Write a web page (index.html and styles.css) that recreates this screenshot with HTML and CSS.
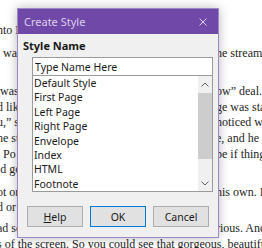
FILE: index.html
```html
<!DOCTYPE html>
<html lang="en">
<head>
    <meta charset="UTF-8" />
    <title>Create Style</title>
    <link rel="stylesheet" href="styles.css">
</head>
<body>
    <div class="doc">
        <p class="para">
            <span class="ln"><span class="l">nto Ni</span></span>
        </p>
        <p class="para scene">
            <span class="ln"><span class="l">  wan</span><span class="r">he stream</span></span>
        </p>
        <p class="para">
            <span class="ln"><span class="l"> was</span><span class="r">ow” deal.</span></span>
            <span class="ln"><span class="l">d lik</span><span class="r">ge was sta</span></span>
            <span class="ln"><span class="l">u,” s</span><span class="r">noticed w</span></span>
            <span class="ln"><span class="l">he st</span><span class="r">e, and he</span></span>
            <span class="ln"><span class="l">. Po</span><span class="r">pe if thing</span></span>
            <span class="ln"><span class="l">ld go</span></span>
        </p>
        <p class="para short">
            <span class="ln"><span class="l">ot on</span><span class="r">his own. I</span></span>
            <span class="ln"><span class="l">d or</span></span>
        </p>
        <p class="para">
            <span class="ln"><span class="l">ad so</span><span class="r">rious. And</span></span>
            <span class="ln">s of the screen. So you could see that gorgeous, beautiful</span>
        </p>
    </div>

    <div class="dialog">
        <div class="titlebar">
            <span class="title">Create Style</span>
            <svg class="close" width="8" height="8" viewBox="0 0 8 8"><path d="M0.5 0.5L7.5 7.5M7.5 0.5L0.5 7.5" /></svg>
        </div>
        <div class="dialog-body">
            <label class="field-label" for="styleName">Style Name</label>
            <input class="name-input" id="styleName" type="text" value="Type Name Here" />
            <div class="listbox">
                <ul class="items">
                    <li>Default Style</li>
                    <li>First Page</li>
                    <li>Left Page</li>
                    <li>Right Page</li>
                    <li>Envelope</li>
                    <li>Index</li>
                    <li>HTML</li>
                    <li>Footnote</li>
                </ul>
                <div class="scrollbar">
                    <div class="arrow">
                        <svg width="8" height="5" viewBox="0 0 8 5"><path d="M0.5 4.5L4 1L7.5 4.5" /></svg>
                    </div>
                    <div class="track"><div class="thumb"></div></div>
                    <div class="arrow">
                        <svg width="8" height="5" viewBox="0 0 8 5"><path d="M0.5 0.5L4 4L7.5 0.5" /></svg>
                    </div>
                </div>
            </div>
            <div class="buttons">
                <button><u>H</u>elp</button>
                <button class="default">OK</button>
                <button>Cancel</button>
            </div>
        </div>
    </div>
</body>
</html>
```

FILE: styles.css
```css
* {
    box-sizing: border-box;
}
body {
    margin: 0;
    width: 262px;
    height: 248px;
    overflow: hidden;
    position: relative;
    background: #FFFFFF;
    font-family: "Liberation Serif", serif;
    color: #262626;
}
.doc {
    margin-left: -3px;
    padding-top: 23px;
    font-size: 12px;
    line-height: 15.6px;
}
.para {
    margin: 0 0 7px;
}
.para.scene {
    margin-bottom: 23px;
}
.para.short {
    margin-bottom: 5px;
}
.ln {
    display: flex;
    height: 15.6px;
    white-space: pre;
}
.ln .l {
    width: 219px;
    overflow: hidden;
    flex-shrink: 0;
}
.ln .r {
    flex-shrink: 0;
}

.dialog {
    position: absolute;
    left: 17px;
    top: 8px;
    width: 202px;
    height: 230px;
    border: 1px solid #9C88C6;
    background: #F0F0F0;
    box-shadow: 0 0 10px rgba(0,0,0,0.28);
    font-family: "Noto Sans", sans-serif;
    font-size: 10.5px;
    color: #1A1A1A;
}
.titlebar {
    height: 25px;
    background: #7048A8;
    color: #DCCFEC;
    display: flex;
    align-items: center;
    justify-content: space-between;
    padding: 0 11px 0 6px;
    font-size: 11px;
}
.close path {
    stroke: #DCCFEC;
    stroke-width: 1;
    fill: none;
}
.dialog-body {
    padding: 0 5px;
}
.field-label {
    display: block;
    margin-top: 5px;
    height: 13px;
    line-height: 13px;
    font-weight: bold;
    font-size: 11px;
}
.name-input {
    display: block;
    margin: 5px 0 0 9px;
    width: 181px;
    height: 19px;
    padding: 0 2px;
    border: 1px solid #9A9A9A;
    background: #FFFFFF;
    font-family: inherit;
    font-size: 10.5px;
    color: #1A1A1A;
    outline: none;
}
.listbox {
    display: flex;
    margin-left: 9px;
    width: 181px;
    height: 116px;
    border: 1px solid #9A9A9A;
    border-top: none;
    background: #FFFFFF;
}
.items {
    flex: 1;
    list-style: none;
    margin: 0;
    padding: 0 0 0 1px;
    line-height: 14.4px;
}
.scrollbar {
    width: 14px;
    display: flex;
    flex-direction: column;
    background: #F0F0F0;
}
.arrow {
    height: 16px;
    display: flex;
    align-items: center;
    justify-content: center;
}
.arrow path {
    stroke: #606060;
    stroke-width: 1;
    fill: none;
}
.track {
    flex: 1;
}
.thumb {
    height: 66px;
    margin-top: 1px;
    background: #CDCDCD;
}
.buttons {
    display: flex;
    gap: 7px;
    margin: 14px 0 0 4px;
}
.buttons button {
    width: 56px;
    height: 21px;
    padding: 0;
    border: 1px solid #ADADAD;
    background: #E1E1E1;
    font-family: inherit;
    font-size: 10.5px;
    color: #1A1A1A;
}
.buttons button.default {
    border-color: #0078D7;
}
```
